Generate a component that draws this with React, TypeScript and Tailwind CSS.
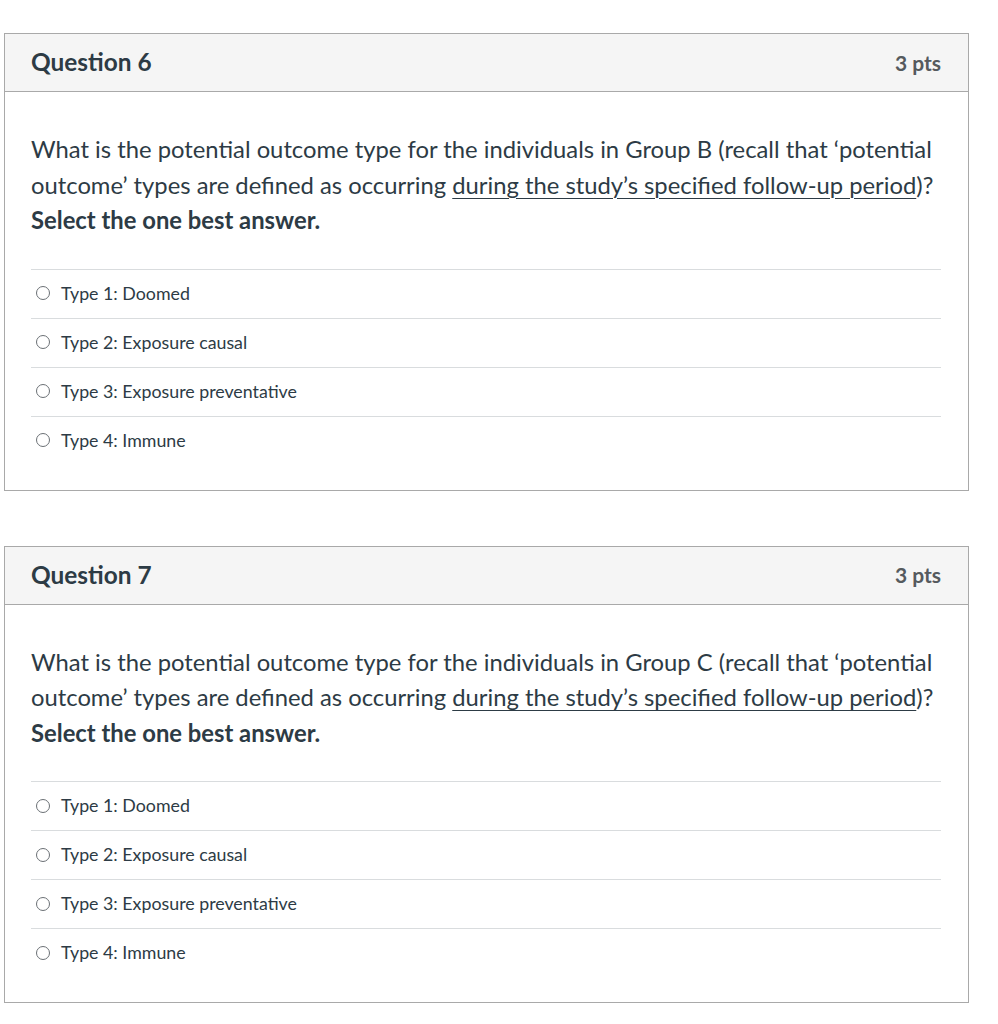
import React from 'react'

const answers = ['Type 1: Doomed', 'Type 2: Exposure causal', 'Type 3: Exposure preventative', 'Type 4: Immune']

function Question({ num, group }: { num: number; group: string }) {
  return (
    <div className="border border-[#a9a9a9] bg-white">
      <div className="h-[58px] flex items-center justify-between pl-[26px] pr-[27px] bg-[#f5f5f5] border-b border-[#a9a9a9]">
        <h2 className="text-[24.4px] font-bold text-[#2d3b45]">Question {num}</h2>
        <span className="text-[21px] font-bold text-[#555a5e]">3 pts</span>
      </div>
      <div className="pl-[26px] pr-[27px] pt-[40px] pb-[25px]">
        <p className="text-[23.8px] leading-[35.5px] text-[#2d3b45]">
          What is the potential outcome type for the individuals in Group {group} (recall that ‘potential outcome’ types are defined as occurring{' '}
          <span className="underline decoration-1 underline-offset-[4px]">during the study’s specified follow-up period</span>)?{' '}
          <strong className="font-bold">Select the one best answer.</strong>
        </p>
        <div className="mt-[30px]">
          {answers.map((a) => (
            <div key={a} className="h-[49px] border-t border-[#d9dcde] flex items-center gap-[11px] pl-[5px] pb-[1px]">
              <span className="w-[14px] h-[14px] rounded-full border border-[#6b7075] bg-white" />
              <span className="text-[17.8px] text-[#2d3b45]">{a}</span>
            </div>
          ))}
        </div>
      </div>
    </div>
  )
}

export default function App() {
  return (
    <div className="min-h-screen bg-white pt-[33px] pl-[4px] pr-[29px] font-['Lato',sans-serif]">
      <div className="flex flex-col gap-[55px]">
        <Question num={6} group="B" />
        <Question num={7} group="C" />
      </div>
    </div>
  )
}
